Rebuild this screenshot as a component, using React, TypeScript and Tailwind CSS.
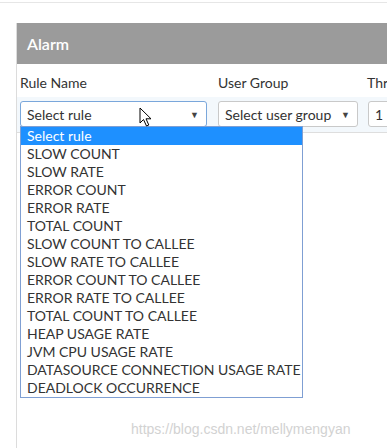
import React from "react";

const rules = [
    "Select rule",
    "SLOW COUNT",
    "SLOW RATE",
    "ERROR COUNT",
    "ERROR RATE",
    "TOTAL COUNT",
    "SLOW COUNT TO CALLEE",
    "SLOW RATE TO CALLEE",
    "ERROR COUNT TO CALLEE",
    "ERROR RATE TO CALLEE",
    "TOTAL COUNT TO CALLEE",
    "HEAP USAGE RATE",
    "JVM CPU USAGE RATE",
    "DATASOURCE CONNECTION USAGE RATE",
    "DEADLOCK OCCURRENCE",
];

const Caret = () => <span className="text-[9px] text-[#444] leading-none">▼</span>;

const App = () => {
    return (
        <div
            className="relative w-[387px] h-[448px] overflow-hidden bg-white text-[#333]"
            style={{ fontFamily: "Lato, 'Open Sans', sans-serif" }}
        >
            <div className="h-[2px]" />
            <div className="h-px bg-[#e6e6e6]" />
            <div className="ml-[16px] mt-[20px] h-[500px] w-[500px] border-l border-[#dcdcdc]">
                <div className="h-[41px] bg-[#9b9b9b] flex items-center pl-[10px] text-white text-[16px] font-semibold">
                    Alarm
                </div>
                <div className="relative">
                    <div className="flex pl-[3px] pt-[10px] h-[33px] text-[14px] leading-[18px]">
                        <div className="w-[198px] shrink-0">Rule Name</div>
                        <div className="w-[149px] shrink-0">User Group</div>
                        <div className="shrink-0">Threshold</div>
                    </div>
                    <div className="flex pl-[3px] pt-[4px] h-[36px] bg-[#f3f8fc] border-b border-[#dedede]">
                        <div className="relative shrink-0 w-[187px] h-[26px] border border-[#7aa7db] rounded-[3px] bg-white flex items-center justify-between pl-[6px] pr-[7px] text-[14px]">
                            <span>Select rule</span>
                            <Caret />
                        </div>
                        <div className="ml-[11px] shrink-0 w-[140px] h-[26px] border border-[#c9c9c9] rounded-[3px] bg-white flex items-center justify-between pl-[6px] pr-[7px] text-[14px]">
                            <span>Select user group</span>
                            <Caret />
                        </div>
                        <div className="ml-[10px] shrink-0 w-[60px] h-[26px] border border-[#c9c9c9] rounded-[3px] bg-white flex items-center pl-[6px] text-[14px]">
                            1
                        </div>
                    </div>
                    <div className="absolute left-[3px] top-[62px] w-[283px] border border-[#7f9fd3] bg-white text-[14px]">
                        {rules.map((r, i) => (
                            <div
                                key={r}
                                className={`h-[18px] leading-[18px] pl-[6px] ${i === 0 ? "bg-[#1e90ff] text-white" : "text-[#333]"}`}
                            >
                                {r}
                            </div>
                        ))}
                    </div>
                </div>
            </div>
            <svg className="absolute left-[139px] top-[107px]" width="14" height="21" viewBox="0 0 14 21">
                <path
                    d="M1 1 L1 16 L4.5 12.5 L7.5 19 L9.8 18 L7 11.8 L12 11.8 Z"
                    fill="white"
                    stroke="black"
                    strokeWidth="1"
                    strokeLinejoin="miter"
                />
            </svg>
            <div
                className="absolute left-[131px] top-[420px] text-[14px] text-[#d2d2d2] leading-[18px]"
                style={{ fontFamily: "'Liberation Sans', Arial, sans-serif" }}
            >
                https://blog.csdn.net/mellymengyan
            </div>
        </div>
    );
};

export default App;
